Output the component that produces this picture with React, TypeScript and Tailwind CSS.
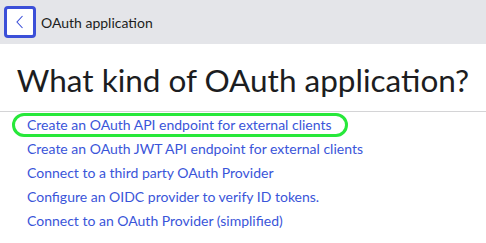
import React from 'react';

const links = [
  'Create an OAuth API endpoint for external clients',
  'Create an OAuth JWT API endpoint for external clients',
  'Connect to a third party OAuth Provider',
  'Configure an OIDC provider to verify ID tokens.',
  'Connect to an OAuth Provider (simplified)',
];

export default function App() {
  return (
    <div className="w-[486px] h-[243px] bg-white overflow-hidden font-['Lato',sans-serif]">
      {/* top bar */}
      <div className="h-[44px] bg-[#e4e5e9] flex items-center pl-[4px] gap-[5px]">
        <button className="w-[32px] h-[32px] bg-white border-[3px] border-[#3b4fd8] rounded-[4px] flex items-center justify-center">
          <svg width="10" height="14" viewBox="0 0 10 14" fill="none">
            <path d="M7.5 1 L2 7 L7.5 13" stroke="#3b4fd8" strokeWidth="1.1" />
          </svg>
        </button>
        <span className="text-[14px] text-[#1c1d21]">OAuth application</span>
      </div>

      {/* heading */}
      <h1 className="text-[31.5px] leading-[36px] text-[#1c1d21] text-center pt-[18px] pb-[13px] border-b border-[#d4d4d6]">
        What kind of OAuth application?
      </h1>

      {/* options */}
      <ul className="pt-[1px] pl-[12px] text-[14px] leading-[24px] text-[#3a55d9]">
        {links.map((l, i) => (
          <li key={l}>
            <a
              href="#"
              className={
                i === 0
                  ? 'inline-block pl-[15px] pr-[16px] rounded-[12px] outline-[3px] outline-solid outline-[#27e83a] -outline-offset-[3px] h-[24px]'
                  : 'inline-block px-[15px]'
              }
            >
              {l}
            </a>
          </li>
        ))}
      </ul>
    </div>
  );
}
